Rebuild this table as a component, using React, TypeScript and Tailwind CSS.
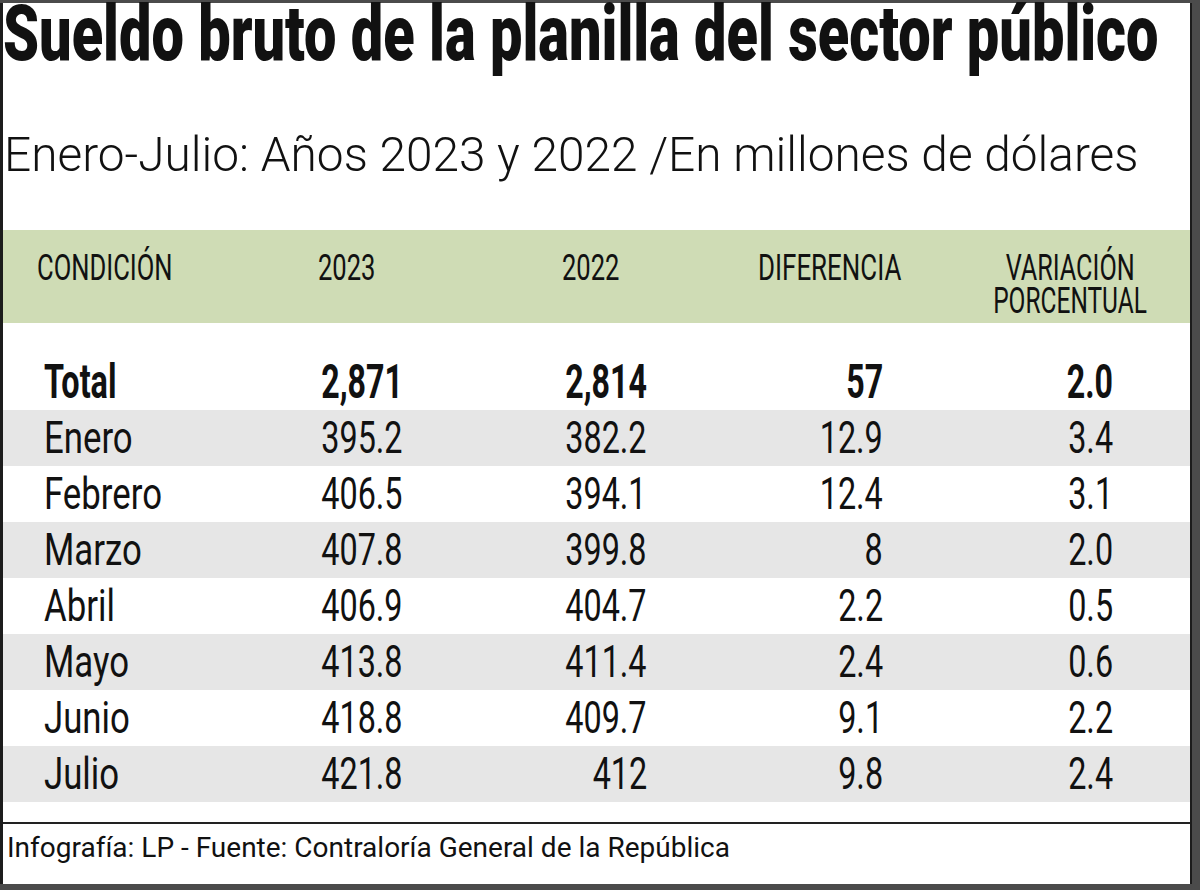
import type { ReactNode } from "react";

type Row = {
  label: string;
  y2023: string;
  y2022: string;
  diff: string;
  pct: string;
  total?: boolean;
};

const rows: Row[] = [
  { label: "Total", y2023: "2,871", y2022: "2,814", diff: "57", pct: "2.0", total: true },
  { label: "Enero", y2023: "395.2", y2022: "382.2", diff: "12.9", pct: "3.4" },
  { label: "Febrero", y2023: "406.5", y2022: "394.1", diff: "12.4", pct: "3.1" },
  { label: "Marzo", y2023: "407.8", y2022: "399.8", diff: "8", pct: "2.0" },
  { label: "Abril", y2023: "406.9", y2022: "404.7", diff: "2.2", pct: "0.5" },
  { label: "Mayo", y2023: "413.8", y2022: "411.4", diff: "2.4", pct: "0.6" },
  { label: "Junio", y2023: "418.8", y2022: "409.7", diff: "9.1", pct: "2.2" },
  { label: "Julio", y2023: "421.8", y2022: "412", diff: "9.8", pct: "2.4" },
];

// condensed look: the fonts on hand are all normal width, so the glyphs get squeezed
const Sq = ({ className, children }: { className: string; children: ReactNode }) => (
  <span className={`inline-block whitespace-nowrap ${className}`}>{children}</span>
);

const Num = ({ value, total }: { value: string; total?: boolean }) =>
  total ? (
    <Sq className="origin-right scale-x-[0.67]">{value}</Sq>
  ) : (
    <Sq className="origin-right scale-x-[0.735]">{value}</Sq>
  );

const App = () => {
  return (
    <div className="w-[1200px] h-[890px] bg-[#4b4b4b] pt-[3px] pr-[8px] pb-[6px] flex flex-col font-['Roboto',sans-serif] text-[#111]">
      <div className="flex-1 bg-white border-l-[3px] border-r-2 border-[#1c1c1c] flex flex-col">
        {/* title */}
        <div className="h-[60px] text-[57.7px] leading-[60px] font-black">
          <Sq className="origin-center scale-y-[1.334]">Sueldo bruto de la planilla del sector público</Sq>
        </div>
        <div className="mt-[67px] h-[50px] text-[49px] leading-[50px] font-light pl-[1px]">
          <Sq className="origin-left scale-x-[0.975]">Enero-Julio: Años 2023 y 2022 /En millones de dólares</Sq>
        </div>

        {/* table header */}
        <div className="mt-[50px] h-[93px] bg-[#cfdcb5] pt-[22px] flex text-[36px] leading-[33px]">
          <div className="w-[315px] pl-[34px]">
            <Sq className="origin-left scale-x-[0.71]">CONDICIÓN</Sq>
          </div>
          <div className="w-[244px]">
            <Sq className="origin-left scale-x-[0.71]">2023</Sq>
          </div>
          <div className="w-[196px]">
            <Sq className="origin-left scale-x-[0.71]">2022</Sq>
          </div>
          <div className="w-[200px]">
            <Sq className="origin-left scale-x-[0.72]">DIFERENCIA</Sq>
          </div>
          <div className="w-[224px] flex flex-col items-center">
            <Sq className="origin-center scale-x-[0.70]">VARIACIÓN</Sq>
            <Sq className="origin-center scale-x-[0.68]">PORCENTUAL</Sq>
          </div>
        </div>

        {/* table body */}
        <div className="mt-[31px] flex flex-col">
          {rows.map((r, i) => (
            <div
              key={r.label}
              className={`h-[56px] flex leading-[56px] ${r.total ? "text-[48px] font-bold" : "text-[44px]"} ${i % 2 === 1 ? "bg-[#e6e6e6]" : ""}`}
            >
              <div className="w-[247px] pl-[41px]">
                {r.total ? (
                  <Sq className="origin-left scale-x-[0.675]">{r.label}</Sq>
                ) : (
                  <Sq className="origin-left scale-x-[0.79]">{r.label}</Sq>
                )}
              </div>
              <div className="w-[153px] text-right">
                <Num value={r.y2023} total={r.total} />
              </div>
              <div className="w-[244px] text-right">
                <Num value={r.y2022} total={r.total} />
              </div>
              <div className="w-[236px] text-right">
                <Num value={r.diff} total={r.total} />
              </div>
              <div className="w-[230px] text-right">
                <Num value={r.pct} total={r.total} />
              </div>
            </div>
          ))}
        </div>

        {/* source */}
        <div className="mt-[20px] h-[2px] bg-[#222]" />
        <div className="pt-[9px] pl-[4px] h-[39px] text-[28px] leading-[30px] whitespace-nowrap">
          Infografía: LP - Fuente: Contraloría General de la República
        </div>
      </div>
    </div>
  );
};

export default App;
